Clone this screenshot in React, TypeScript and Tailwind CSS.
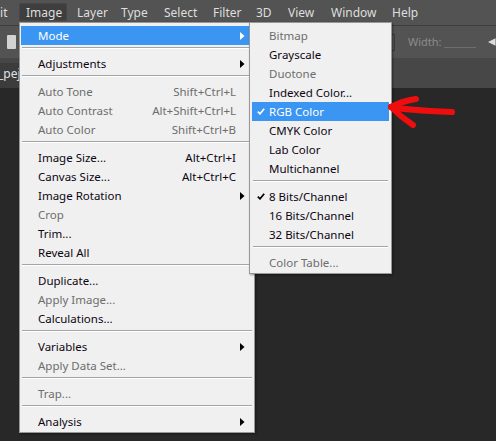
type Row =
  | { label: string; shortcut?: string; disabled?: boolean; sub?: boolean; active?: boolean; checked?: boolean }
  | 'sep';

const menuBar = [
  { label: 'Image', w: 'w-[48px] mr-[3px]', open: true },
  { label: 'Layer', w: 'w-[44px]' },
  { label: 'Type', w: 'w-[43px]' },
  { label: 'Select', w: 'w-[49px]' },
  { label: 'Filter', w: 'w-[43px]' },
  { label: '3D', w: 'w-[32px]' },
  { label: 'View', w: 'w-[43px]' },
  { label: 'Window', w: 'w-[61px]' },
  { label: 'Help', w: 'w-[40px]' },
];

const imageMenu: Row[] = [
  { label: 'Mode', sub: true, active: true },
  'sep',
  { label: 'Adjustments', sub: true },
  'sep',
  { label: 'Auto Tone', shortcut: 'Shift+Ctrl+L', disabled: true },
  { label: 'Auto Contrast', shortcut: 'Alt+Shift+Ctrl+L', disabled: true },
  { label: 'Auto Color', shortcut: 'Shift+Ctrl+B', disabled: true },
  'sep',
  { label: 'Image Size...', shortcut: 'Alt+Ctrl+I' },
  { label: 'Canvas Size...', shortcut: 'Alt+Ctrl+C' },
  { label: 'Image Rotation', sub: true },
  { label: 'Crop', disabled: true },
  { label: 'Trim...' },
  { label: 'Reveal All' },
  'sep',
  { label: 'Duplicate...' },
  { label: 'Apply Image...', disabled: true },
  { label: 'Calculations...' },
  'sep',
  { label: 'Variables', sub: true },
  { label: 'Apply Data Set...', disabled: true },
  'sep',
  { label: 'Trap...', disabled: true },
  'sep',
  { label: 'Analysis', sub: true },
];

const modeMenu: Row[] = [
  { label: 'Bitmap', disabled: true },
  { label: 'Grayscale' },
  { label: 'Duotone', disabled: true },
  { label: 'Indexed Color...' },
  { label: 'RGB Color', active: true, checked: true },
  { label: 'CMYK Color' },
  { label: 'Lab Color' },
  { label: 'Multichannel' },
  'sep',
  { label: '8 Bits/Channel', checked: true },
  { label: '16 Bits/Channel' },
  { label: '32 Bits/Channel' },
  'sep',
  { label: 'Color Table...', disabled: true },
];

const Arrow = ({ white }: { white?: boolean }) => (
  <svg width="5" height="8" viewBox="0 0 5 8" className="absolute right-[8px] top-[6px]">
    <polygon points="0,0 4.5,4 0,8" fill={white ? '#ffffff' : '#000000'} />
  </svg>
);

const Check = ({ white }: { white?: boolean }) => (
  <svg width="8" height="7" viewBox="0 0 8 7" className="absolute left-[5px] top-[6px]">
    <path d="M0.8 3.6 L3 5.8 L7.2 0.8" stroke={white ? '#ffffff' : '#000000'} strokeWidth="1.7" fill="none" />
  </svg>
);

const MenuRows = ({ rows }: { rows: Row[] }) => (
  <>
    {rows.map((r, i) =>
      r === 'sep' ? (
        <div key={i} className="h-[9px] px-[1px] pt-[2px]">
          <div className="border-t border-t-[#a5a5a5] border-b border-b-white" />
        </div>
      ) : (
        <div
          key={i}
          className={`relative flex h-[19px] items-center pl-[17px] pr-[17px] ${
            r.active ? 'bg-[#3a95f3] text-white' : r.disabled ? 'text-[#6d6d6d]' : 'text-[#0d0510]'
          }`}
        >
          {r.checked && <Check white={r.active} />}
          <span className="flex-1">{r.label}</span>
          {r.shortcut && <span>{r.shortcut}</span>}
          {r.sub && <Arrow white={r.active} />}
        </div>
      )
    )}
  </>
);

export default function App() {
  return (
    <div className="relative flex h-[441px] w-[496px] flex-col overflow-hidden bg-[#282828] font-['Noto_Sans',sans-serif] text-[11.5px]">
      {/* menu bar */}
      <div className="flex h-[26px] items-stretch border-b border-b-[#3d3d3d] bg-[#535353] pt-[3px] pb-[4px] text-[12px] text-[#dedede]">
        <div className="w-[19px] overflow-hidden whitespace-nowrap">
          <div className="-ml-[14px] leading-[19px]">Edit</div>
        </div>
        {menuBar.map((m) => (
          <div
            key={m.label}
            className={`${m.w} pl-[7px] leading-[19px] ${m.open ? 'bg-[#3e3e3e] shadow-[inset_0_0_0_1px_#474747]' : ''}`}
          >
            {m.label}
          </div>
        ))}
      </div>

      {/* options bar */}
      <div className="flex h-[32px] items-center bg-[#535353]">
        <div className="ml-[7px] h-[14px] w-[10px] rounded-[1px] bg-[#d2d2d2]" />
        <div className="ml-[350px] flex h-[17px] w-[30px] items-center justify-end border border-[#3b3b3b] pr-[3px]">
          <svg width="6" height="4" viewBox="0 0 6 4">
            <path d="M0.5 0.5 L3 3 L5.5 0.5" stroke="#bdbdbd" strokeWidth="1" fill="none" />
          </svg>
        </div>
        <span className="ml-[13px] text-[11px] text-[#8c8c8c]">Width:</span>
        <div className="ml-[3px] mt-[10px] h-[1px] w-[34px] bg-[#6e6e6e]" />
        <svg width="8" height="8" viewBox="0 0 8 8" className="ml-[12px]">
          <polygon points="0,4 8,0 8,8" fill="#dcdcdc" />
        </svg>
      </div>

      {/* tab bar */}
      <div className="flex h-[30px] items-end bg-[#474747] pt-[4px]">
        <div className="flex h-[25px] w-[90px] items-center bg-[#3c3c3c] pb-[3px] text-[12px] text-[#e2e2e2]">
          <span className="-ml-[2px]">_pej</span>
        </div>
      </div>

      <div className="flex-1 bg-[#282828]" />

      {/* Image menu */}
      <div className="absolute left-[19px] top-[22px] w-[236px] border border-[#979797] bg-[#f0f0f0] px-[1px] pt-[3px] pb-[1px] shadow-[1px_1px_2px_rgba(0,0,0,0.4)]">
        <MenuRows rows={imageMenu} />
      </div>

      {/* Mode submenu */}
      <div className="absolute left-[249px] top-[22px] w-[143px] border border-[#979797] bg-[#f0f0f0] px-[2px] pt-[3px] pb-[1px] shadow-[1px_1px_2px_rgba(0,0,0,0.4)]">
        <MenuRows rows={modeMenu} />
      </div>

      {/* red annotation arrow */}
      <svg width="75" height="40" viewBox="0 0 75 40" className="absolute left-[385px] top-[92px]">
        <g stroke="#f00d0d" strokeWidth="6" strokeLinecap="round" fill="none">
          <path d="M31 7 Q17 9 6 15" />
          <path d="M6 15 Q20 18 67 20" />
          <path d="M6 15 Q16 25 28 33" />
        </g>
      </svg>
    </div>
  );
}
